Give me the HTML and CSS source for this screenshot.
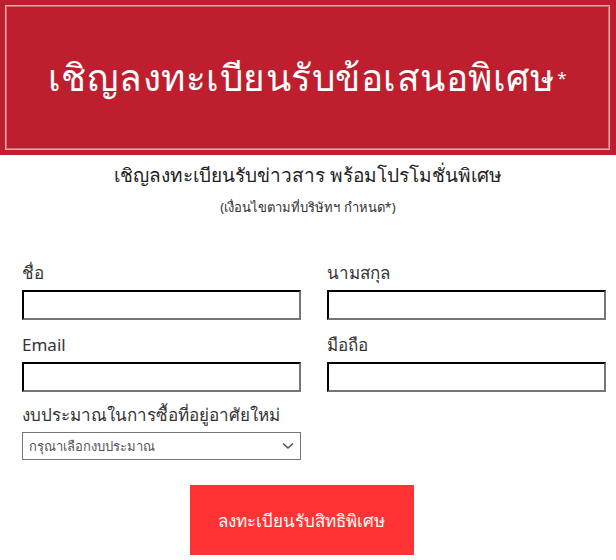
FILE: index.html
```html
<!DOCTYPE html>
<html lang="th">
<head>
    <meta charset="UTF-8">
    <title>ลงทะเบียน</title>
    <link rel="stylesheet" href="styles.css">
</head>
<body>
<div class="banner">
    <div class="banner-frame">เชิญลงทะเบียนรับข้อเสนอพิเศษ<sup>*</sup></div>
</div>

<div class="intro">
    <h2>เชิญลงทะเบียนรับข่าวสาร พร้อมโปรโมชั่นพิเศษ</h2>
    <p>(เงื่อนไขตามที่บริษัทฯ กำหนด*)</p>
</div>

<form class="reg-form">
    <div class="row">
        <label class="field">
            <span>ชื่อ</span>
            <input type="text">
        </label>
        <label class="field">
            <span>นามสกุล</span>
            <input type="text">
        </label>
    </div>
    <div class="row">
        <label class="field">
            <span>Email</span>
            <input type="text">
        </label>
        <label class="field">
            <span>มือถือ</span>
            <input type="text">
        </label>
    </div>
    <div class="row">
        <label class="field">
            <span>งบประมาณในการซื้อที่อยู่อาศัยใหม่</span>
            <div class="select">
                <em>กรุณาเลือกงบประมาณ</em>
                <svg width="12" height="8" viewBox="0 0 12 8"><path d="M1 1.5l5 4.5 5-4.5" fill="none" stroke="#555" stroke-width="1.6"/></svg>
            </div>
        </label>
    </div>
    <div class="submit">
        <button type="button">ลงทะเบียนรับสิทธิพิเศษ</button>
    </div>
</form>
</body>
</html>
```

FILE: styles.css
```css
* {
    margin: 0;
    padding: 0;
    box-sizing: border-box;
    font-family: "Noto Sans", "DejaVu Sans", sans-serif;
}

body {
    width: 616px;
    background: #fff;
    color: #333;
}

.banner {
    height: 155px;
    background: #be1e2d;
    padding: 5px 6px 5px 5px;
}

.banner-frame {
    height: 100%;
    border: 1px solid #f3a7ae;
    box-shadow: inset 0 0 0 1px rgba(255, 255, 255, .35);
    display: flex;
    align-items: center;
    justify-content: center;
    color: #fff;
    font-size: 37px;
    letter-spacing: 0.5px;
}

.banner-frame sup {
    font-size: 17px;
    vertical-align: 18px;
    margin-left: 3px;
}

.intro {
    text-align: center;
    padding-top: 6px;
}

.intro h2 {
    font-size: 19px;
    font-weight: normal;
    line-height: 28px;
    color: #222;
}

.intro p {
    font-size: 13px;
    line-height: 20px;
    margin-top: 8px;
    color: #333;
}

.reg-form {
    padding: 43px 10px 0 22px;
}

.row {
    display: flex;
    gap: 26px;
    margin-bottom: 12px;
}

.row:nth-child(2) {
    margin-bottom: 10px;
}

.row:nth-child(3) {
    margin-bottom: 6px;
}

.field {
    width: 279px;
    display: block;
}

.field span {
    display: block;
    font-size: 17px;
    line-height: 26px;
    color: #333;
    margin-bottom: 4px;
}

.field input {
    display: block;
    width: 279px;
    height: 30px;
    border: 2px inset #767676;
    border-color: #1e1e1e #767676 #767676 #1e1e1e;
    background: #fff;
}

.select {
    height: 28px;
    border: 1px solid #767676;
    display: flex;
    align-items: center;
    justify-content: space-between;
    padding: 0 6px 0 6px;
}

.select em {
    font-style: normal;
    font-size: 13px;
    color: #555;
}

.submit {
    text-align: center;
    padding: 19px 0 0 0;
    margin-left: -25px;
}

.submit button {
    width: 224px;
    height: 70px;
    border: 0;
    background: #ff3333;
    color: #fff;
    font-size: 17px;
}
```
